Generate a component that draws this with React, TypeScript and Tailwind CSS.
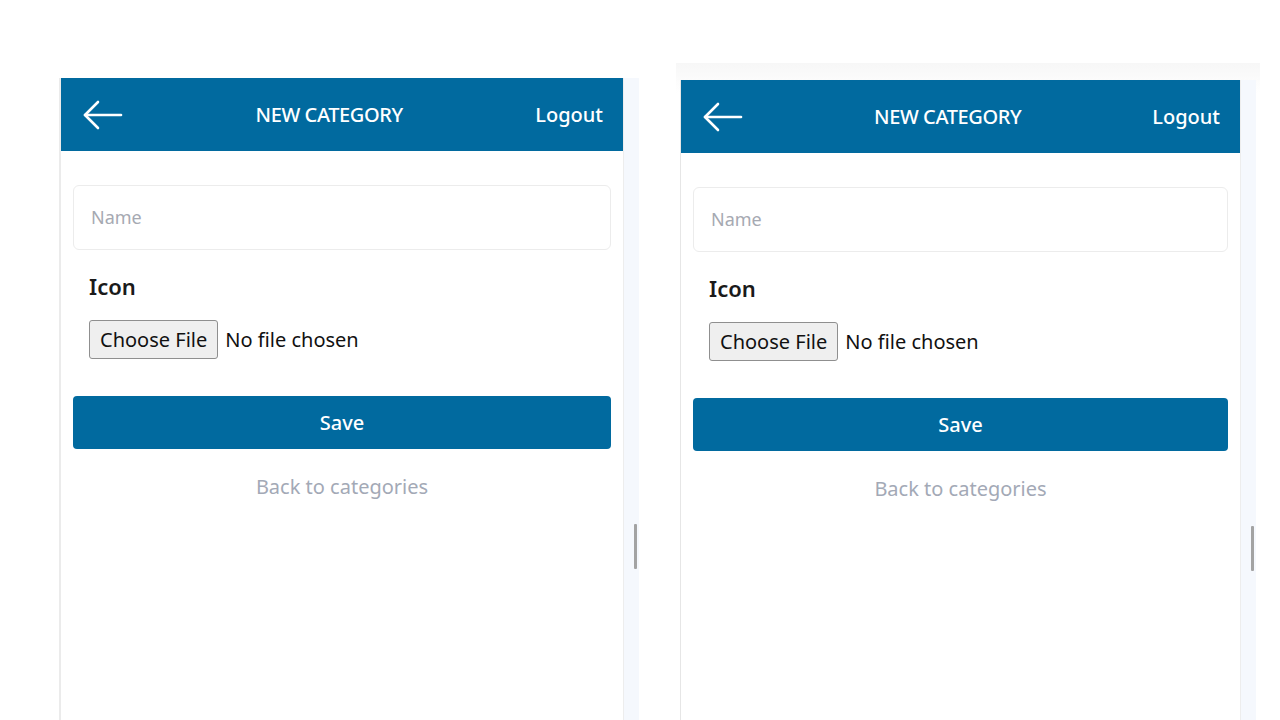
import React from "react";

function BackArrow() {
  return (
    <svg className="w-[40px] h-[30px]" viewBox="0 0 40 30" fill="none" stroke="white" strokeWidth="2.6" strokeLinecap="round" strokeLinejoin="round">
      <path d="M38 15H2" />
      <path d="M15 2L2 15l13 13" />
    </svg>
  );
}

function PhoneScreen({ width }: { width: number }) {
  return (
    <div className="flex h-full">
      <div className="flex flex-col bg-white" style={{ width }}>
        <header className="h-[73px] bg-[#016a9f] flex items-center justify-between pl-[22px] pr-[20px] text-white">
          <BackArrow />
          <h1 className="text-[20px] font-medium tracking-[-0.4px]">NEW CATEGORY</h1>
          <button className="text-[20px] font-medium">Logout</button>
        </header>
        <div className="px-[12px] pt-[34px]">
          <div className="h-[65px] rounded-[6px] border border-[#ececec] flex items-center px-[17px]">
            <span className="text-[18px] text-[#a6a9b2]">Name</span>
          </div>
          <div className="px-[16px] pt-[21px]">
            <label className="block text-[22px] font-semibold text-[#1a1a1a] leading-[30px]">Icon</label>
            <div className="flex items-center mt-[19px] gap-[7px]">
              <span className="h-[39px] px-[10px] flex items-center rounded-[3px] border border-[#8f8f8f] bg-[#efefef] text-[20px] text-[#111]">Choose File</span>
              <span className="text-[20px] text-[#111]">No file chosen</span>
            </div>
          </div>
          <button className="mt-[37px] w-full h-[53px] rounded-[4px] bg-[#016a9f] text-white text-[20px] font-medium flex items-center justify-center">Save</button>
          <p className="text-center text-[20px] text-[#a3a9b6] mt-[23px]">Back to categories</p>
        </div>
      </div>
      <div className="w-[16px] bg-[#f5f8fd] border-l border-[#ededed] flex flex-col items-end pr-[2px]">
        <div className="mt-[446px] w-[3px] h-[45px] bg-[#a3a3a3] rounded-[1px]" />
      </div>
    </div>
  );
}

export default function App() {
  return (
    <div className="w-[1280px] h-[720px] overflow-hidden bg-white flex" style={{ fontFamily: '"Noto Sans", "Open Sans", sans-serif' }}>
      <div className="ml-[59px] mt-[78px] h-[642px] border-l-2 border-[#ebebeb]">
        <PhoneScreen width={562} />
      </div>
      <div className="ml-[37px] mt-[63px] h-[657px] px-[4px] pt-[17px] bg-gradient-to-b from-[#f7f7f7] to-white to-[30px]">
        <div className="h-full border-l border-[#e6e6e6]">
          <PhoneScreen width={559} />
        </div>
      </div>
    </div>
  );
}
